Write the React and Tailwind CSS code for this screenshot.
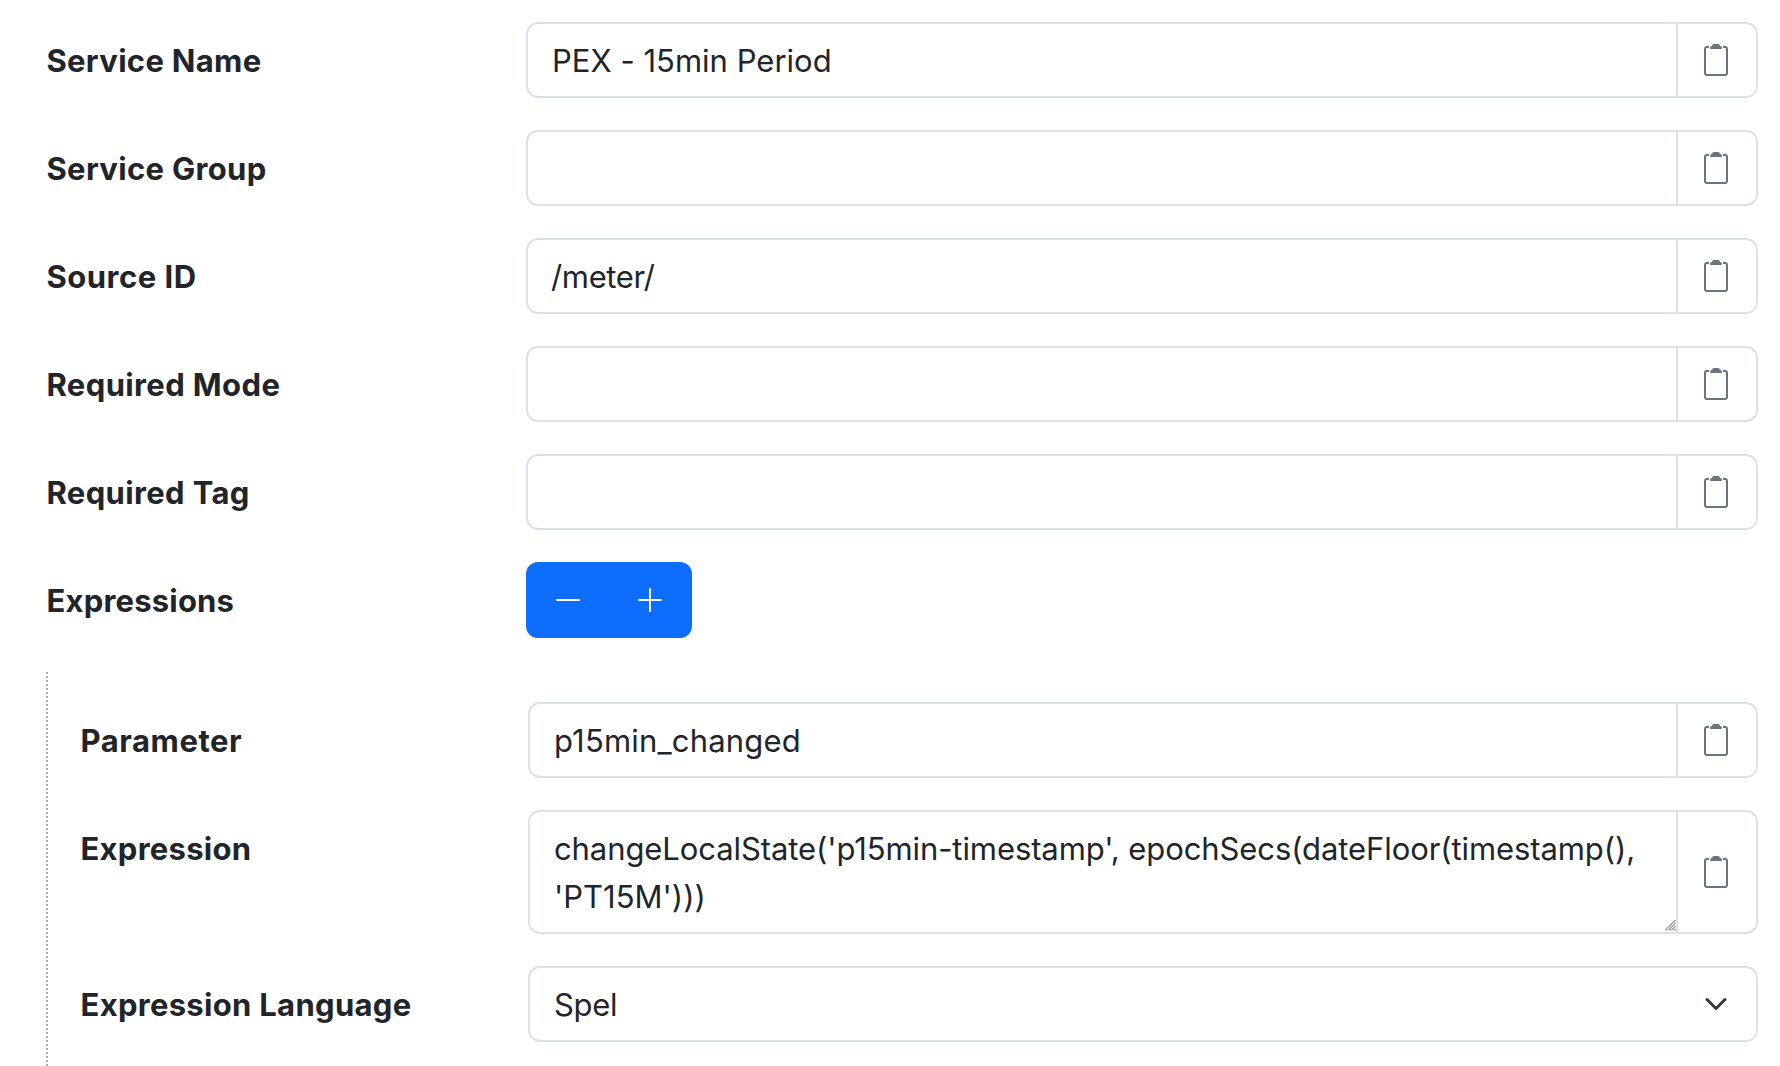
const fields = [
  { label: 'Service Name', labelSpacing: 'tracking-[0.3px]', value: 'PEX - 15min Period', valueSpacing: 'tracking-[0.02px]' },
  { label: 'Service Group', labelSpacing: 'tracking-[0.32px]', value: '' },
  { label: 'Source ID', labelSpacing: 'tracking-[0.5px]', value: '/meter/', valueSpacing: 'tracking-[-0.35px] -indent-px' },
  { label: 'Required Mode', labelSpacing: 'tracking-[0.38px]', value: '' },
  { label: 'Required Tag', labelSpacing: 'tracking-[0.36px]', value: '' },
];

function ClipboardIcon() {
  return (
    <svg width="24" height="32" viewBox="0 0 24 32" fill="none" className="block">
      <path d="M5 3H3Q1 3 1 5V29Q1 31 3 31H21Q23 31 23 29V5Q23 3 21 3H19" stroke="#6c757d" strokeWidth="2" />
      <path d="M6 4.200Q6 2 8 1.800Q8.300 0 10 0H14Q15.700 0 16 1.800Q18 2 18 4.200Q18 5 17 5H7Q6 5 6 4.200Z" fill="#6c757d" />
    </svg>
  );
}

function CopyButton() {
  return (
    <button type="button" aria-label="Copy" className="flex w-20 shrink-0 items-center justify-center border-l-2 border-[#dee2e6] pr-0.5">
      <ClipboardIcon />
    </button>
  );
}

function Label({ spacing, children }) {
  return (
    <label className={`block h-[76px] shrink-0 whitespace-nowrap pl-[0.5px] font-bold leading-[78px] ${spacing}`}>{children}</label>
  );
}

function InputGroup({ value, spacing = '' }) {
  return (
    <div className="flex h-[76px] rounded-xl border-2 border-[#dee2e6] bg-white">
      <div className={`flex-1 whitespace-nowrap pl-6 leading-[74px] ${spacing}`}>{value}</div>
      <CopyButton />
    </div>
  );
}

function ResizeGrip() {
  return (
    <svg width="11" height="11" viewBox="0 0 11 11" className="absolute bottom-px right-0" stroke="#555" strokeWidth="1">
      <path d="M0 10.500L10.500 0M3 10.500L10.500 3M6 10.500L10.500 6M9 10.500L10.500 9" />
    </svg>
  );
}

export default function App() {
  return (
    <main className="h-[1066px] w-[1780px] overflow-hidden bg-white pl-[46px] pr-[22px] pt-[22px] font-['Inter','Liberation_Sans',sans-serif] text-[31px] text-[#212529]">
      <div className="grid gap-8">
        {fields.map((f) => (
          <div key={f.label} className="grid grid-cols-[480px_1fr]">
            <Label spacing={f.labelSpacing}>{f.label}</Label>
            <InputGroup value={f.value} spacing={f.valueSpacing} />
          </div>
        ))}
        <div className="grid grid-cols-[480px_1fr]">
          <Label spacing="tracking-[0.2px]">Expressions</Label>
          <div className="flex h-[76px] w-[166px] items-center gap-[58px] rounded-xl bg-[#0d6efd] pl-[30px]">
            <button type="button" aria-label="Remove">
              <svg width="24" height="24" viewBox="0 0 24 24" className="block" stroke="#fff" strokeWidth="2" strokeLinecap="round">
                <path d="M1 12H23" />
              </svg>
            </button>
            <button type="button" aria-label="Add">
              <svg width="24" height="24" viewBox="0 0 24 24" className="block" stroke="#fff" strokeWidth="2" strokeLinecap="round">
                <path d="M1 12H23M12 1V23" />
              </svg>
            </button>
          </div>
        </div>
      </div>

      <section className="mt-[34px] flex h-[394px]">
        <div className="w-0.5 shrink-0 bg-[repeating-linear-gradient(to_bottom,#aaaaaa_0px,#aaaaaa_2px,transparent_2px,transparent_4px)]" />
        <div className="flex flex-1 flex-col gap-8 pl-8 pt-[30px]">
          <div className="grid grid-cols-[448px_1fr]">
            <Label spacing="tracking-[0.55px]">Parameter</Label>
            <InputGroup value="p15min_changed" spacing="tracking-[0.18px]" />
          </div>
          <div className="grid grid-cols-[448px_1fr]">
            <Label spacing="tracking-[0.28px]">Expression</Label>
            <div className="flex h-[124px] rounded-xl border-2 border-[#dee2e6] bg-white">
              <div className="relative flex-1 whitespace-nowrap pl-6 pt-[13px] leading-[48px]">
                <div className="tracking-[-0.09px]">changeLocalState('p15min-timestamp', epochSecs(dateFloor(timestamp(),</div>
                <div className="tracking-[0px]">'PT15M')))</div>
                <ResizeGrip />
              </div>
              <CopyButton />
            </div>
          </div>
          <div className="grid grid-cols-[448px_1fr]">
            <Label spacing="tracking-[0.3px]">Expression Language</Label>
            <div className="flex h-[76px] items-center justify-between rounded-xl border-2 border-[#dee2e6] bg-white pl-6 pr-7">
              <span className="pt-0.5 leading-[72px] tracking-[-0.3px]">Spel</span>
              <svg width="24" height="24" viewBox="0 0 16 16" fill="none" stroke="#343a40" strokeWidth="2" strokeLinecap="round" strokeLinejoin="round">
                <path d="m2 5 6 6 6-6" />
              </svg>
            </div>
          </div>
        </div>
      </section>
    </main>
  );
}
